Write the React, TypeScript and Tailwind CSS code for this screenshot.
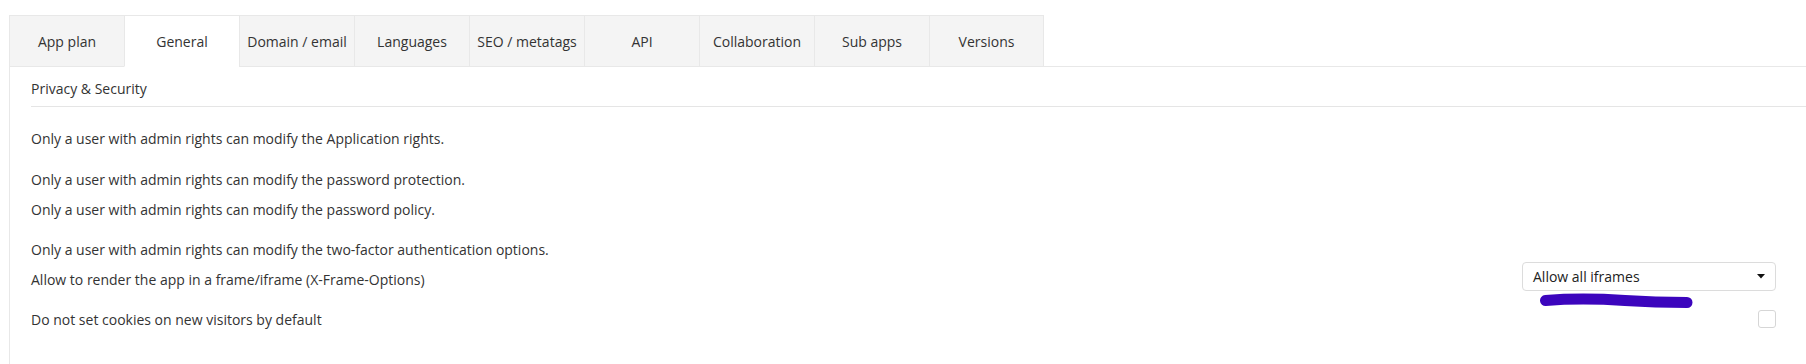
import { useState } from "react";

const tabs = [
  "App plan",
  "General",
  "Domain / email",
  "Languages",
  "SEO / metatags",
  "API",
  "Collaboration",
  "Sub apps",
  "Versions",
];

export default function App(): JSX.Element {
  const [active, setActive] = useState<string>("General");
  const [noCookies, setNoCookies] = useState<boolean>(false);

  return (
    <div
      className="w-[1806px] h-[364px] bg-white pt-[15px] pl-[9px] text-[14px] text-[#333] overflow-hidden"
      style={{ fontFamily: '"Open Sans", "Liberation Sans", sans-serif' }}
    >
      {/* Tabs */}
      <div className="flex h-[52px]">
        {tabs.map((tab, i) => (
          <div
            key={tab}
            onClick={() => setActive(tab)}
            className={`w-[115px] shrink-0 flex items-center justify-center border-t border-l border-[#e8e8e8] cursor-pointer whitespace-nowrap ${
              i === tabs.length - 1 ? "border-r" : ""
            } ${
              active === tab
                ? "bg-white border-b border-b-white"
                : "bg-[#f4f4f4] border-b"
            }`}
          >
            {tab}
          </div>
        ))}
        <div className="flex-1 border-b border-[#e8e8e8]"></div>
      </div>

      {/* Panel */}
      <div className="border-l border-[#e8e8e8] h-[300px] pl-[21px] pt-[12px]">
        <div className="h-[28px] leading-[20px] border-b border-[#e5e5e5]">
          Privacy &amp; Security
        </div>

        <div className="mt-[16px] pr-[30px] flex flex-col">
          <div className="h-[30px] flex items-center">
            Only a user with admin rights can modify the Application rights.
          </div>

          <div className="mt-[11px] h-[30px] flex items-center">
            Only a user with admin rights can modify the password protection.
          </div>
          <div className="h-[30px] flex items-center">
            Only a user with admin rights can modify the password policy.
          </div>

          <div className="mt-[10px] h-[30px] flex items-center">
            Only a user with admin rights can modify the two-factor authentication options.
          </div>
          <div className="h-[30px] flex items-center justify-between">
            <span>Allow to render the app in a frame/iframe (X-Frame-Options)</span>
            <div className="relative mb-[5px]">
              <div className="w-[254px] h-[29px] border border-[#dcdcdc] rounded-[4px] flex items-center justify-between pl-[10px] pr-[10px] text-[#222]">
                <span>Allow all iframes</span>
                <svg width="8" height="5" viewBox="0 0 8 5">
                  <path d="M0 0 H8 L4 4.5 Z" fill="#111" />
                </svg>
              </div>
              {/* hand-drawn annotation */}
              <svg
                className="absolute left-[18px] top-[29px]"
                width="154"
                height="20"
                viewBox="0 0 154 20"
              >
                <path
                  d="M5.5 9.5 C 30 7.5, 55 7.5, 85 9.5 S 130 11.5, 147 11.5"
                  stroke="#3c05bd"
                  strokeWidth="11"
                  strokeLinecap="round"
                  fill="none"
                />
              </svg>
            </div>
          </div>

          <div className="mt-[10px] h-[30px] flex items-center justify-between">
            <span>Do not set cookies on new visitors by default</span>
            <button
              onClick={() => setNoCookies(!noCookies)}
              className={`w-[18px] h-[18px] rounded-[3px] border border-[#d6d6d6] ${
                noCookies ? "bg-[#3c05bd]" : "bg-white"
              }`}
            ></button>
          </div>
        </div>
      </div>
    </div>
  );
}
